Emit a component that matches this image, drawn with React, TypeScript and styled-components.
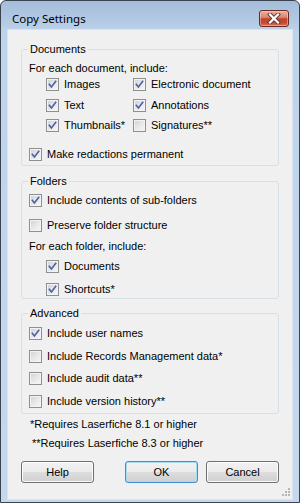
import React from "react";
import styled, { createGlobalStyle } from "styled-components";

const GlobalStyle = createGlobalStyle`
  html, body { margin: 0; padding: 0; background: #ffffff; }
  body { font-family: "Liberation Sans", Arial, sans-serif; font-size: 11px; color: #000; }
  #root { width: 300px; height: 503px; }
`;

const Window = styled.div`
  width: 300px;
  height: 503px;
  box-sizing: border-box;
  border: 1px solid #3a434e;
  border-radius: 6px 6px 0 0;
  background: linear-gradient(180deg, #a3bddb 0px, #b3cae4 20px, #bed4eb 32px, #c4d8ee 100%);
  display: flex;
  flex-direction: column;
  overflow: hidden;
`;

const TitleBar = styled.div`
  height: 29px;
  flex: none;
  display: flex;
  align-items: flex-start;
  justify-content: space-between;
  padding: 0 10px 0 11px;
`;

const Title = styled.div`
  font-family: "Noto Sans", "Open Sans", sans-serif;
  font-size: 11.5px;
  line-height: 16px;
  margin-top: 10px;
  color: #000;
`;

const CloseButton = styled.div`
  width: 30px;
  height: 17px;
  margin-top: 9px;
  box-sizing: border-box;
  border: 1px solid #6a2b22;
  border-radius: 3px;
  background: linear-gradient(180deg, #e9ad9b 0%, #d98a74 42%, #c2422a 52%, #c64a30 78%, #d5775d 100%);
  box-shadow: inset 0 0 0 1px rgba(255, 220, 210, 0.45);
  display: flex;
  align-items: center;
  justify-content: center;
`;

const Client = styled.div`
  flex: 1;
  margin: 0 7px 3px 7px;
  background: #f0f0f0;
  display: flex;
  flex-direction: column;
  padding: 13px 13px 0 13px;
  position: relative;
  box-shadow: 0 0 0 1px #d9e4f0;
`;

const Group = styled.fieldset<{ $pb: number; $mt?: number }>`
  margin: ${(p) => p.$mt ?? 0}px 0 0 0;
  padding: 0 0 ${(p) => p.$pb}px 0;
  border: 1px solid #d5dfe5;
  border-radius: 3px;
  min-width: 0;
  display: flex;
  flex-direction: column;
  align-items: flex-start;
`;

const Legend = styled.legend`
  margin-left: 6px;
  padding: 0 2px;
  line-height: 13px;
  font-size: 11px;
`;

const Caption = styled.div<{ $mt: number; $indent: number }>`
  margin-top: ${(p) => p.$mt}px;
  padding-left: ${(p) => p.$indent}px;
  line-height: 13px;
  white-space: nowrap;
`;

const Row = styled.label<{ $mt?: number; $indent?: number }>`
  display: flex;
  align-items: center;
  gap: 5px;
  height: 13px;
  line-height: 13px;
  margin-top: ${(p) => p.$mt ?? 0}px;
  padding-left: ${(p) => p.$indent ?? 0}px;
  white-space: nowrap;
`;

const CheckGrid = styled.div<{ $mt: number }>`
  display: grid;
  grid-template-columns: 87px auto;
  row-gap: 7.5px;
  margin-top: ${(p) => p.$mt}px;
  padding-left: 24px;
`;

const Box = styled.span`
  width: 13px;
  height: 13px;
  flex: none;
  box-sizing: border-box;
  border: 1px solid #8e8f8f;
  background: linear-gradient(135deg, #cdd0d5 0%, #e6e7e9 50%, #f7f7f7 100%);
  box-shadow: inset 0 0 0 1px #f3f3f3;
  display: flex;
  align-items: center;
  justify-content: center;
`;

const Note = styled.div<{ $mt: number; $indent: number }>`
  margin-top: ${(p) => p.$mt}px;
  padding-left: ${(p) => p.$indent}px;
  line-height: 13px;
  white-space: nowrap;
`;

const ButtonRow = styled.div`
  display: flex;
  margin-top: 11px;
`;

const ButtonGroup = styled.div`
  display: flex;
  gap: 8px;
  margin-left: auto;
`;

const Button = styled.button<{ $default?: boolean }>`
  width: 73px;
  height: 22px;
  box-sizing: border-box;
  padding: 0;
  font-family: "Liberation Sans", Arial, sans-serif;
  font-size: 11px;
  color: #000;
  border: 1px solid ${(p) => (p.$default ? "#3c8fd6" : "#707070")};
  border-radius: 3px;
  background: linear-gradient(180deg, #f2f2f2 0%, #ebebeb 48%, #dddddd 52%, #cfcfcf 100%);
  box-shadow: inset 0 0 0 1px ${(p) => (p.$default ? "#a7dcf7" : "#fbfbfb")};
`;

const Grip = styled.svg`
  position: absolute;
  right: 2px;
  bottom: 2px;
`;

function Check({ checked }: { checked?: boolean }) {
  return (
    <Box>
      {checked && (
        <svg width="11" height="11" viewBox="0 0 11 11">
          <path d="M2.3 5.3 L4.4 7.9 L8.7 2.3" fill="none" stroke="#4d62a3" strokeWidth="1.6" strokeLinecap="square" strokeLinejoin="miter" />
        </svg>
      )}
    </Box>
  );
}

function CheckItem({ label, checked, mt, indent }: { label: string; checked?: boolean; mt?: number; indent?: number }) {
  return (
    <Row $mt={mt} $indent={indent}>
      <Check checked={checked} />
      <span>{label}</span>
    </Row>
  );
}

export default function App() {
  return (
    <>
      <GlobalStyle />
      <Window>
        <TitleBar>
          <Title>Copy Settings</Title>
          <CloseButton>
            <svg width="14" height="11" viewBox="0 0 14 11">
              <path d="M3 1.5 L11 9.5 M11 1.5 L3 9.5" stroke="#5b3a34" strokeWidth="4" strokeLinecap="square" />
              <path d="M3 1.5 L11 9.5 M11 1.5 L3 9.5" stroke="#ffffff" strokeWidth="2.2" strokeLinecap="square" />
            </svg>
          </CloseButton>
        </TitleBar>
        <Client>
          <Group $pb={4}>
            <Legend>Documents</Legend>
            <Caption $mt={6} $indent={7}>For each document, include:</Caption>
            <CheckGrid $mt={3}>
              <CheckItem label="Images" checked />
              <CheckItem label="Electronic document" checked />
              <CheckItem label="Text" checked />
              <CheckItem label="Annotations" checked />
              <CheckItem label="Thumbnails*" checked />
              <CheckItem label="Signatures**" />
            </CheckGrid>
            <CheckItem label="Make redactions permanent" checked mt={16} indent={7} />
          </Group>
          <Group $pb={2} $mt={9}>
            <Legend>Folders</Legend>
            <CheckItem label="Include contents of sub-folders" checked mt={6} indent={7} />
            <CheckItem label="Preserve folder structure" mt={12} indent={7} />
            <Caption $mt={8} $indent={7}>For each folder, include:</Caption>
            <CheckItem label="Documents" checked mt={7} indent={24} />
            <CheckItem label="Shortcuts*" checked mt={9.5} indent={24} />
          </Group>
          <Group $pb={5} $mt={8.5}>
            <Legend>Advanced</Legend>
            <CheckItem label="Include user names" checked mt={7} indent={7} />
            <CheckItem label="Include Records Management data*" mt={9.6} indent={7} />
            <CheckItem label="Include audit data**" mt={9.6} indent={7} />
            <CheckItem label="Include version history**" mt={9.6} indent={7} />
          </Group>
          <Note $mt={4} $indent={9}>*Requires Laserfiche 8.1 or higher</Note>
          <Note $mt={6} $indent={11}>**Requires Laserfiche 8.3 or higher</Note>
          <ButtonRow>
            <Button>Help</Button>
            <ButtonGroup>
              <Button $default>OK</Button>
              <Button>Cancel</Button>
            </ButtonGroup>
          </ButtonRow>
          <Grip width="10" height="10" viewBox="0 0 10 10">
            {[
              [8, 0], [8, 3], [5, 3], [8, 6], [5, 6], [2, 6],
            ].map(([x, y], i) => (
              <rect key={i} x={x} y={y + 1} width="2" height="2" fill="#b7b7b7" />
            ))}
          </Grip>
        </Client>
      </Window>
    </>
  );
}
